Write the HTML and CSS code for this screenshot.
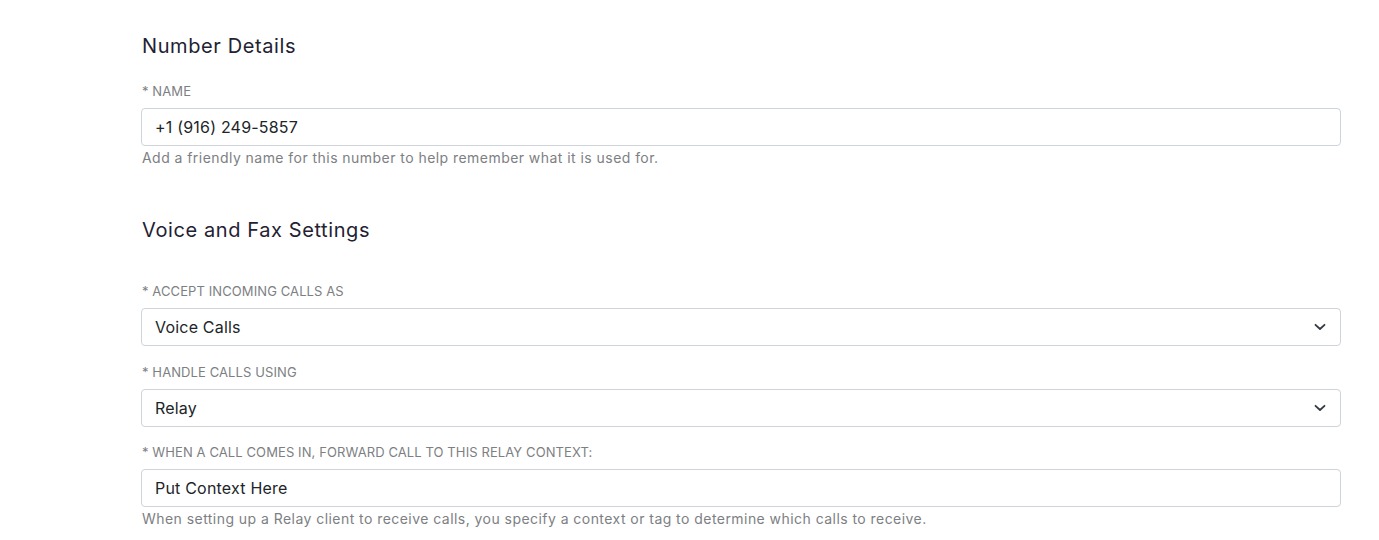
FILE: index.html
```html
<!DOCTYPE html>
<html>
<head>
<meta charset="utf-8">
<link rel="stylesheet" href="styles.css">
</head>
<body>
<div class="page">
  <h2 class="section-title first">Number Details</h2>
  <div class="field">
    <label class="label">* Name</label>
    <div class="control">+1 (916) 249-5857</div>
    <div class="help">Add a friendly name for this number to help remember what it is used for.</div>
  </div>

  <h2 class="section-title second">Voice and Fax Settings</h2>
  <div class="field field-gap">
    <label class="label">* Accept Incoming Calls As</label>
    <div class="control select"><span>Voice Calls</span>
      <svg class="chev" width="12" height="8" viewBox="0 0 12 8"><path d="M1.5 1.8 L6 6 L10.5 1.8" fill="none" stroke="#343a40" stroke-width="1.8" stroke-linecap="round" stroke-linejoin="round"/></svg>
    </div>
  </div>
  <div class="field">
    <label class="label">* Handle Calls Using</label>
    <div class="control select"><span>Relay</span>
      <svg class="chev" width="12" height="8" viewBox="0 0 12 8"><path d="M1.5 1.8 L6 6 L10.5 1.8" fill="none" stroke="#343a40" stroke-width="1.8" stroke-linecap="round" stroke-linejoin="round"/></svg>
    </div>
  </div>
  <div class="field">
    <label class="label">* When a call comes in, forward call to this Relay Context:</label>
    <div class="control">Put Context Here</div>
    <div class="help">When setting up a Relay client to receive calls, you specify a context or tag to determine which calls to receive.</div>
  </div>
</div>
</body>
</html>
```

FILE: styles.css
```css
html, body {
  margin: 0;
  padding: 0;
  background: #ffffff;
}
body {
  font-family: "Inter", "Noto Sans", sans-serif;
  color: #212529;
}
.page {
  margin-left: 141px;
  width: 1200px;
  display: flex;
  flex-direction: column;
}
.section-title {
  font-size: 20px;
  line-height: 24px;
  font-weight: 400;
  letter-spacing: 0.6px;
  color: #1f2233;
  margin: 0 0 0 1px;
}
.section-title.first {
  margin-top: 34px;
  margin-bottom: 24px;
}
.section-title.second {
  margin-top: 34px;
  margin-bottom: 40px;
}
.field {
  display: flex;
  flex-direction: column;
  margin-bottom: 16px;
}
.field-gap {
  margin-bottom: 17px;
}
.label {
  font-size: 13px;
  line-height: 18px;
  letter-spacing: 0.1px;
  text-transform: uppercase;
  color: #7d8083;
  margin: 0 0 8px 1px;
}
.control {
  box-sizing: border-box;
  height: 38px;
  border: 1px solid #ced4da;
  border-radius: 4px;
  padding: 0 13px;
  display: flex;
  align-items: center;
  font-size: 16px;
  letter-spacing: 0.2px;
  color: #212529;
}
.select {
  justify-content: space-between;
  padding-right: 14px;
}
.help {
  font-size: 14px;
  line-height: 20px;
  letter-spacing: 0.45px;
  color: #7d8083;
  margin: 2px 0 0 1px;
}
```
